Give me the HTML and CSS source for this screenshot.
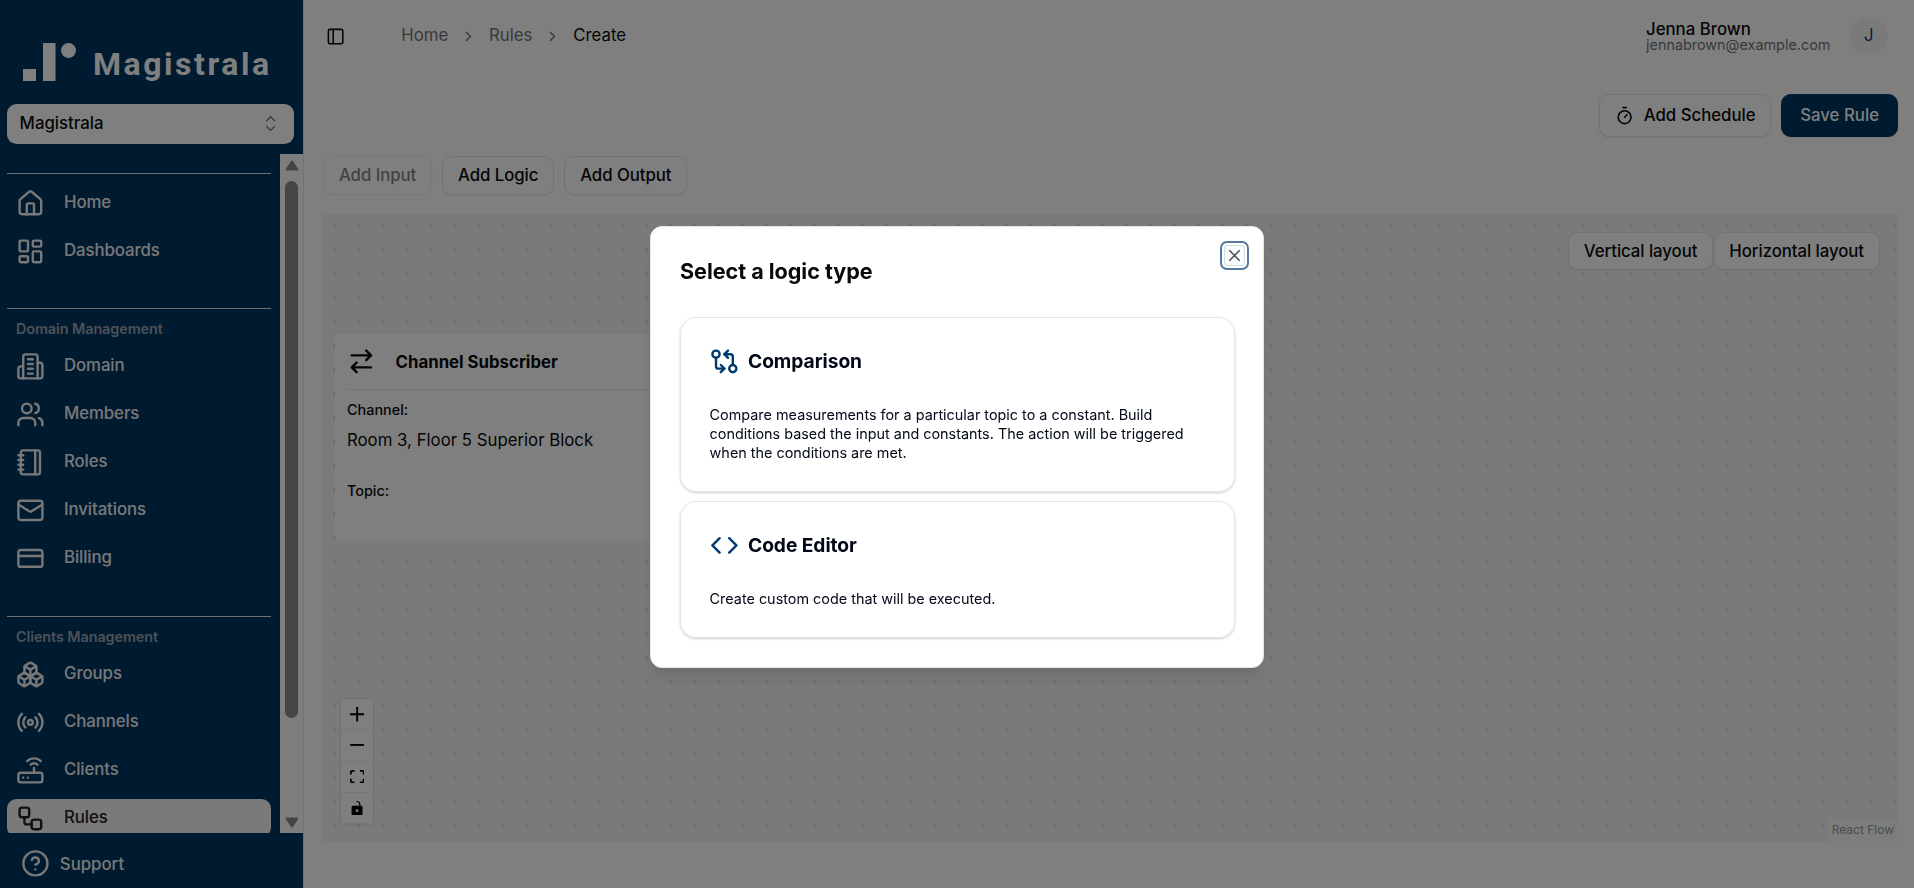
FILE: index.html
```html
<!DOCTYPE html>
<html lang="en">
<head>
<meta charset="utf-8">
<title>Magistrala - Create Rule</title>
<link rel="stylesheet" href="styles.css">
</head>
<body>
<div class="app">
  <aside class="sidebar">
    <div class="brand">
      <svg class="brand-logo" width="248" height="48" viewBox="0 0 248 48">
        <rect x="0" y="28" width="13" height="12"/>
        <rect x="20" y="2" width="12.500" height="38"/>
        <circle cx="45.500" cy="9.500" r="7.500"/>
        <text x="70" y="34" textLength="176" lengthAdjust="spacing">Magistrala</text>
      </svg>
    </div>
    <div class="domain-select">
      <span>Magistrala</span>
      <svg width="19.200" height="19.200" viewBox="0 0 24 24"><path d="m6.500 9 5.500-5.500L17.500 9M6.500 15l5.500 5.500 5.500-5.500"/></svg>
    </div>
    <div class="nav-wrap">
      <nav class="nav">
        <section class="nav-group nav-group-first">
          <a class="nav-item"><svg class="icon" viewBox="0 0 24 24"><path d="M15 21v-8a1 1 0 0 0-1-1h-4a1 1 0 0 0-1 1v8"/><path d="M3 10a2 2 0 0 1 .709-1.528l7-5.999a2 2 0 0 1 2.582 0l7 5.999A2 2 0 0 1 21 10v9a2 2 0 0 1-2 2H5a2 2 0 0 1-2-2z"/></svg><span>Home</span></a>
          <a class="nav-item"><svg class="icon" viewBox="0 0 24 24"><rect width="7" height="9" x="3" y="3" rx="1"/><rect width="7" height="5" x="14" y="3" rx="1"/><rect width="7" height="9" x="14" y="12" rx="1"/><rect width="7" height="5" x="3" y="16" rx="1"/></svg><span>Dashboards</span></a>
        </section>
        <section class="nav-group">
          <h2 class="nav-label">Domain Management</h2>
          <a class="nav-item"><svg class="icon" viewBox="0 0 24 24"><path d="M6 22V4a2 2 0 0 1 2-2h8a2 2 0 0 1 2 2v18Z"/><path d="M6 12H4a2 2 0 0 0-2 2v6a2 2 0 0 0 2 2h2"/><path d="M18 9h2a2 2 0 0 1 2 2v9a2 2 0 0 1-2 2h-2"/><path d="M10 6h4M10 10h4M10 14h4M10 18h4"/></svg><span>Domain</span></a>
          <a class="nav-item"><svg class="icon" viewBox="0 0 24 24"><path d="M16 21v-2a4 4 0 0 0-4-4H6a4 4 0 0 0-4 4v2"/><circle cx="9" cy="7" r="4"/><path d="M22 21v-2a4 4 0 0 0-3-3.870"/><path d="M16 3.130a4 4 0 0 1 0 7.750"/></svg><span>Members</span></a>
          <a class="nav-item"><svg class="icon" viewBox="0 0 24 24"><path d="M2 6h4M2 10h4M2 14h4M2 18h4"/><rect width="16" height="20" x="4" y="2" rx="2"/><path d="M16 2v20"/></svg><span>Roles</span></a>
          <a class="nav-item"><svg class="icon" viewBox="0 0 24 24"><rect width="20" height="16" x="2" y="4" rx="2"/><path d="m22 7-8.970 5.700a1.940 1.940 0 0 1-2.060 0L2 7"/></svg><span>Invitations</span></a>
          <a class="nav-item"><svg class="icon" viewBox="0 0 24 24"><rect width="20" height="14" x="2" y="5" rx="2"/><path d="M2 10h20"/></svg><span>Billing</span></a>
        </section>
        <section class="nav-group">
          <h2 class="nav-label">Clients Management</h2>
          <a class="nav-item"><svg class="icon" viewBox="0 0 24 24"><path d="M2.970 12.920A2 2 0 0 0 2 14.630v3.240a2 2 0 0 0 .970 1.710l3 1.800a2 2 0 0 0 2.060 0L12 19v-5.500l-5-3-4.030 2.420Z"/><path d="m7 16.500-4.740-2.850M7 16.500l5-3M7 16.500v5.170"/><path d="M12 13.500V19l3.970 2.380a2 2 0 0 0 2.060 0l3-1.800a2 2 0 0 0 .970-1.710v-3.240a2 2 0 0 0-.970-1.710L17 10.500l-5 3Z"/><path d="m17 16.500-5-3M17 16.500l4.740-2.850M17 16.500v5.170"/><path d="M7.970 4.420A2 2 0 0 0 7 6.130v4.370l5 3 5-3V6.130a2 2 0 0 0-.970-1.710l-3-1.800a2 2 0 0 0-2.060 0l-3 1.800Z"/><path d="M12 8 7.260 5.150M12 8l4.740-2.850M12 13.500V8"/></svg><span>Groups</span></a>
          <a class="nav-item"><svg class="icon" viewBox="0 0 24 24"><path d="M4.900 19.100C1 15.200 1 8.800 4.900 4.900"/><path d="M7.800 16.200c-2.300-2.300-2.300-6.100 0-8.500"/><circle cx="12" cy="12" r="2"/><path d="M16.200 7.800c2.300 2.300 2.300 6.100 0 8.500"/><path d="M19.100 4.900C23 8.800 23 15.100 19.100 19"/></svg><span>Channels</span></a>
          <a class="nav-item"><svg class="icon" viewBox="0 0 24 24"><rect width="20" height="8" x="2" y="14" rx="2"/><path d="M6.010 18H6M10.010 18H10M15 10v4"/><path d="M17.840 7.170a4 4 0 0 0-5.660 0"/><path d="M20.660 4.340a8 8 0 0 0-11.310 0"/></svg><span>Clients</span></a>
          <a class="nav-item nav-item-active"><svg class="icon" viewBox="0 0 24 24"><rect width="8" height="8" x="3" y="3" rx="2"/><path d="M7 11v4a2 2 0 0 0 2 2h4"/><rect width="8" height="8" x="13" y="13" rx="2"/></svg><span>Rules</span></a>
        </section>
      </nav>
      <div class="scrollbar">
        <svg width="14" height="11" viewBox="0 0 14 11"><path d="M7 1.500 12.500 9.500h-11z"/></svg>
        <div class="scroll-track"><div class="scroll-thumb"></div></div>
        <svg width="14" height="11" viewBox="0 0 14 11"><path d="M7 9.500 12.500 1.500h-11z"/></svg>
      </div>
    </div>
    <div class="support">
      <svg class="icon" viewBox="0 0 24 24"><circle cx="12" cy="12" r="10"/><path d="M9.090 9a3 3 0 0 1 5.830 1c0 2-3 3-3 3"/><path d="M12 17h.01"/></svg>
      <span>Support</span>
    </div>
  </aside>

  <main class="main">
    <header class="topbar">
      <svg class="icon icon-sm icon-panel" viewBox="0 0 24 24"><rect width="18" height="18" x="3" y="3" rx="2"/><path d="M9 3v18"/></svg>
      <div class="crumbs">
        <span>Home</span>
        <svg viewBox="0 0 24 24"><path d="m9 18 6-6-6-6"/></svg>
        <span>Rules</span>
        <svg viewBox="0 0 24 24"><path d="m9 18 6-6-6-6"/></svg>
        <span class="crumb-current">Create</span>
      </div>
      <div class="user">
        <div class="user-text"><span class="user-name">Jenna Brown</span><span class="user-mail">jennabrown@example.com</span></div>
        <div class="avatar">J</div>
      </div>
    </header>
    <div class="actions">
      <button class="btn btn-lg"><svg class="icon icon-sm" viewBox="0 0 24 24"><path d="M10 2h4M12 14l3-3"/><circle cx="12" cy="14" r="8"/></svg><span>Add Schedule</span></button>
      <button class="btn btn-lg btn-primary"><span>Save Rule</span></button>
    </div>
    <div class="tools">
      <button class="btn btn-disabled">Add Input</button>
      <button class="btn">Add Logic</button>
      <button class="btn">Add Output</button>
    </div>
    <div class="canvas">
      <div class="layout-buttons">
        <button class="btn btn-canvas">Vertical layout</button>
        <button class="btn btn-canvas">Horizontal layout</button>
      </div>
      <article class="node">
        <div class="node-head">
          <svg class="icon" viewBox="0 0 24 24"><path d="m16 3 4 4-4 4M20 7H4M8 21l-4-4 4-4M4 17h16"/></svg>
          <span>Channel Subscriber</span>
        </div>
        <div class="node-label">Channel:</div>
        <div class="node-value">Room 3, Floor 5 Superior Block</div>
        <div class="node-label">Topic:</div>
      </article>
      <div class="controls">
        <button class="control"><svg viewBox="0 0 32 32"><path d="M32 18.133H18.133V32h-4.266V18.133H0v-4.266h13.867V0h4.266v13.867H32z"/></svg></button>
        <button class="control"><svg viewBox="0 0 32 5"><path d="M0 0h32v4.200H0z"/></svg></button>
        <button class="control"><svg viewBox="0 0 32 30"><path d="M3.692 4.630c0-.530.400-.938.939-.938h5.215V0H4.708C2.130 0 0 2.054 0 4.630v5.216h3.692V4.631zM27.354 0h-5.200v3.692h5.170c.530 0 .984.400.984.939v5.215H32V4.631A4.624 4.624 0 0 0 27.354 0zm.954 24.830c0 .532-.400.940-.939.940h-5.215v3.768h5.215c2.577 0 4.631-2.130 4.631-4.707v-5.139h-3.692v5.139zm-23.677.940a.919.919 0 0 1-.939-.940v-5.138H0v5.139c0 2.577 2.130 4.707 4.708 4.707h5.138V25.770H4.631z"/></svg></button>
        <button class="control"><svg viewBox="0 0 25 32"><path d="M21.333 10.667H19.810V7.619C19.810 3.429 16.380 0 12.190 0c-4.114 1.828-1.370 2.133.305 2.438 1.676.305 4.420 2.590 4.420 5.181v3.048H3.047A3.056 3.056 0 0 0 0 13.714v15.238A3.056 3.056 0 0 0 3.048 32h18.285a3.056 3.056 0 0 0 3.048-3.048V13.714a3.056 3.056 0 0 0-3.048-3.047zM12.190 24.533a3.056 3.056 0 0 1-3.047-3.047 3.056 3.056 0 0 1 3.047-3.048 3.056 3.056 0 0 1 3.048 3.048 3.056 3.056 0 0 1-3.048 3.047z"/></svg></button>
      </div>
      <div class="attribution">React Flow</div>
    </div>
  </main>
</div>

<div class="overlay">
  <div class="dialog" role="dialog">
    <button class="close"><svg viewBox="0 0 15 15"><path d="M3.400 3.400 11.600 11.600M11.600 3.400 3.400 11.600"/></svg></button>
    <h1 class="dialog-title">Select a logic type</h1>
    <div class="options">
      <div class="option">
        <div class="option-head"><svg class="icon" viewBox="0 0 24 24"><circle cx="5" cy="6" r="3"/><path d="M12 6h5a2 2 0 0 1 2 2v7"/><path d="m15 9-3-3 3-3"/><circle cx="19" cy="18" r="3"/><path d="M12 18H7a2 2 0 0 1-2-2V9"/><path d="m9 15 3 3-3 3"/></svg><span>Comparison</span></div>
        <p>Compare measurements for a particular topic to a constant. Build conditions based the input and constants. The action will be triggered when the conditions are met.</p>
      </div>
      <div class="option">
        <div class="option-head"><svg class="icon" viewBox="0 0 24 24"><path d="m16 18 6-6-6-6M8 6l-6 6 6 6"/></svg><span>Code Editor</span></div>
        <p>Create custom code that will be executed.</p>
      </div>
    </div>
  </div>
</div>
</body>
</html>
```
FILE: styles.css
```css
* { box-sizing: border-box; }

html, body { height: 100%; }

body {
  margin: 0;
  overflow: hidden;
  background: #fff;
  color: #0a0a0a;
  font-family: Inter, "Liberation Sans", sans-serif;
  font-size: 16.8px;
  line-height: 24px;
}

button { font: inherit; color: inherit; }

.icon {
  width: 28.8px;
  height: 28.8px;
  flex: none;
  fill: none;
  stroke: currentColor;
  stroke-width: 2;
  stroke-linecap: round;
  stroke-linejoin: round;
}

.icon-sm { width: 19.2px; height: 19.2px; }

.icon-panel { margin-top: 1px; }

.app { display: flex; height: 100%; }

/* Sidebar */
.sidebar {
  width: 304px;
  flex: none;
  display: flex;
  flex-direction: column;
  background: #003460;
  color: #f1f1f1;
  font-weight: 500;
  letter-spacing: -.08px;
  border-right: 1px solid #e5e5e5;
}

.brand { height: 104px; padding: 41px 0 0 23px; flex: none; }

.brand-logo { display: block; fill: #fff; }

.brand-logo text {
  font-family: Roboto, sans-serif;
  font-weight: 700;
  font-size: 32px;
}

.domain-select {
  height: 40px;
  flex: none;
  margin: 0 9px 10px 7px;
  padding: 0 14px 0 12.6px;
  display: flex;
  align-items: center;
  justify-content: space-between;
  background: #fff;
  color: #0a0a0a;
  letter-spacing: 0;
  border-radius: 9.6px;
}

.domain-select span { position: relative; top: -1px; }

.domain-select svg { fill: none; stroke: #777; stroke-width: 1.7; }

.nav-wrap { height: 679px; flex: none; display: flex; overflow: hidden; }

.nav { flex: 1; padding: 19px 9px 0 7px; }

.nav-group {
  border-top: 1px solid #e0e0e0;
  padding-top: 10px;
  display: flex;
  flex-direction: column;
  gap: 10px;
  margin-bottom: 38.8px;
}

.nav-group-first { margin-bottom: 37.8px; }

.nav-label {
  margin: -.2px 0 -.7px;
  padding-left: 9px;
  font-size: 14.4px;
  line-height: 19.2px;
  font-weight: 600;
  color: #9aa5b0;
}

.nav-item {
  height: 38px;
  flex: none;
  display: flex;
  align-items: center;
  gap: 19.2px;
  padding-left: 9px;
  border-radius: 9.6px;
}

.nav-item span { position: relative; top: -.8px; }

.nav-item-active { background: #f5f5f5; color: #222; }

.scrollbar {
  width: 23px;
  padding: 6px 0 5px;
  background: #fcfcfc;
  display: flex;
  flex-direction: column;
  align-items: center;
}

.scrollbar svg { fill: #8b8b8b; stroke: #8b8b8b; stroke-width: 2; stroke-linejoin: round; }

.scroll-track { flex: 1; padding-top: 10px; }

.scroll-thumb { width: 13px; height: 537px; border-radius: 7px; background: #8b8b8b; }

.support { flex: 1; display: flex; align-items: center; gap: 10px; padding: 6px 0 0 21px; letter-spacing: 0; }

/* Main column */
.main {
  flex: 1;
  min-width: 0;
  padding: 0 16px 0 19px;
  display: flex;
  flex-direction: column;
}

.topbar { height: 72px; display: flex; align-items: center; padding: 0 10px 0 3px; }

.crumbs {
  display: flex;
  align-items: center;
  gap: 12px;
  margin-left: 56px;
  margin-top: -2px;
  color: #737373;
  font-weight: 400;
}

.crumbs svg {
  width: 16.8px;
  height: 16.8px;
  position: relative;
  top: 1px;
  fill: none;
  stroke: currentColor;
  stroke-width: 2;
  stroke-linecap: round;
  stroke-linejoin: round;
}

.crumb-current { color: #0a0a0a; }

.user { margin-left: auto; display: flex; align-items: center; gap: 19.2px; }

.user-text { display: flex; flex-direction: column; padding-top: 2px; }

.user-name { font-weight: 500; line-height: 16.8px; }

.user-mail { font-size: 14.4px; line-height: 16px; color: #737373; }

.avatar {
  width: 38.4px;
  height: 38.4px;
  border-radius: 50%;
  background: #f5f5f5;
  color: #1e3a5f;
  display: flex;
  align-items: center;
  justify-content: center;
  padding-bottom: 2px;
}

.actions { margin-top: 22px; display: flex; justify-content: flex-end; gap: 10px; }

.tools { margin-top: 19px; display: flex; gap: 10px; }

.btn {
  height: 39px;
  padding: 0 14.9px 2px;
  display: flex;
  align-items: center;
  border: 1px solid #e5e5e5;
  border-radius: 9.6px;
  background: #fff;
  font-weight: 500;
  letter-spacing: -.06px;
  white-space: nowrap;
  box-shadow: 0 1px 2px rgba(0, 0, 0, .05);
}

.btn-lg { height: 43px; padding: 0 14.5px; gap: 9.6px; letter-spacing: 0; }

.btn-lg span { position: relative; top: -1px; }

.btn-primary { background: #003460; border-color: #003460; color: #fff; padding: 0 18px; }

.btn-disabled { opacity: .5; }

/* Flow canvas */
.canvas {
  position: relative;
  height: 628px;
  margin-top: 19px;
  background-color: #f1f5f9;
  background-image: radial-gradient(circle, #a0a0a8 0, #a0a0a8 .6px, transparent .9px);
  background-size: 24px 24px;
  background-position: -.5px -.5px;
}

.layout-buttons { position: absolute; top: 18px; right: 18.5px; display: flex; gap: 1px; }

.btn-canvas { height: 38px; padding: 0 14.5px 1px; }

.node {
  position: absolute;
  left: 12px;
  top: 120px;
  width: 360px;
  height: 207px;
  padding: 0 12px;
  background: #fff;
  border-radius: 4px;
}

.node-head {
  height: 56px;
  display: flex;
  align-items: center;
  gap: 19.8px;
  border-bottom: 1px solid #e5e5e5;
  font-weight: 700;
}

.node-label { margin-top: 10px; font-size: 14.4px; line-height: 20px; font-weight: 500; }

.node-value { margin: 8px 0 29px; }

.controls {
  position: absolute;
  left: 18px;
  bottom: 18px;
  width: 32px;
  box-shadow: 0 0 2px 1px rgba(0, 0, 0, .08);
}

.control {
  width: 32px;
  height: 31.2px;
  padding: 0;
  display: flex;
  align-items: center;
  justify-content: center;
  background: #fefefe;
  border: 0;
  border-bottom: 1px solid #eee;
}

.control svg { width: 14.4px; max-height: 14.4px; }

.attribution {
  position: absolute;
  right: 0;
  bottom: 0;
  padding: 2px 4px 3px;
  font-size: 12px;
  line-height: 18px;
  color: #999;
  background: rgba(255, 255, 255, .5);
}

/* Modal */
.overlay {
  position: fixed;
  inset: 0;
  display: flex;
  align-items: center;
  justify-content: center;
  padding-top: 5px;
  background: rgba(0, 0, 0, .5);
}

.dialog {
  position: relative;
  width: 614px;
  height: 442px;
  padding: 29px 28px 29px 29px;
  background: #fff;
  border: 1px solid #e5e5e5;
  border-radius: 12px;
  box-shadow: 0 12px 18px -4px rgba(0, 0, 0, .1), 0 5px 7px -5px rgba(0, 0, 0, .1);
}

.close {
  position: absolute;
  top: 18px;
  right: 18px;
  width: 21px;
  height: 21px;
  padding: 0;
  display: flex;
  align-items: center;
  justify-content: center;
  background: #fbfcfd;
  border: 1px solid #d4dde6;
  border-radius: 3px;
  box-shadow: 0 0 0 2px #fff, 0 0 0 4px #557a9e;
}

.close svg { width: 19px; height: 19px; flex: none; stroke: #444; stroke-width: 1.1; }

.dialog-title {
  margin: 4px 0 35.6px;
  font-size: 21.6px;
  line-height: 22px;
  font-weight: 700;
  letter-spacing: -.04px;
}

.options { display: flex; flex-direction: column; gap: 9.6px; }

.option {
  padding: 28.6px 29px 28.4px 28.6px;
  border: 1px solid #e5e5e5;
  border-radius: 16px;
  color: #020817;
  box-shadow: 0 1px 3px rgba(0, 0, 0, .1), 0 1px 2px rgba(0, 0, 0, .1);
}

.option-head {
  display: flex;
  align-items: center;
  gap: 9.6px;
  font-size: 19.2px;
  font-weight: 700;
  letter-spacing: -.05px;
}

.option-head .icon { color: #003a6e; }

.option p { margin: 29.4px 0 0; font-size: 14.4px; line-height: 19.2px; }
```
